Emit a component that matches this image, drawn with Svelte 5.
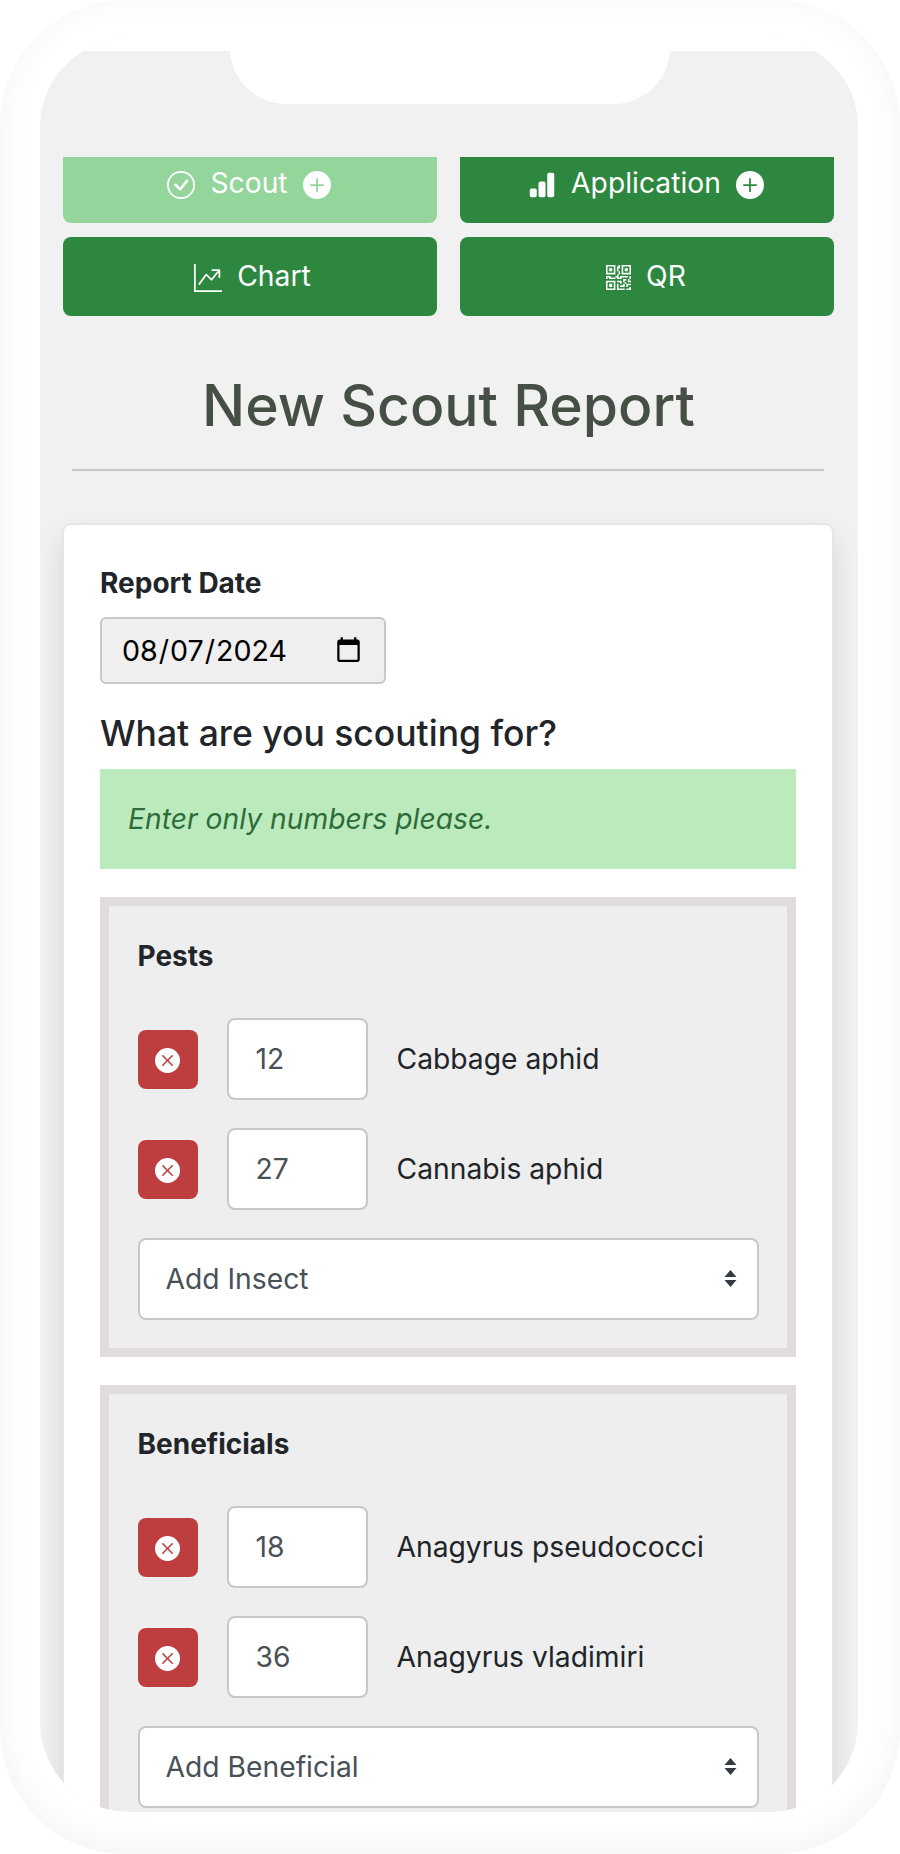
<script lang="ts">
	const groups = [
		{
			title: 'Pests',
			placeholder: 'Add Insect',
			rows: [
				{ count: 12, name: 'Cabbage aphid' },
				{ count: 27, name: 'Cannabis aphid' }
			]
		},
		{
			title: 'Beneficials',
			placeholder: 'Add Beneficial',
			rows: [
				{ count: 18, name: 'Anagyrus pseudococci' },
				{ count: 36, name: 'Anagyrus vladimiri' }
			]
		}
	];
</script>

<div class="shell">
	<div class="screen">
		<div class="topbar"></div>
		<div class="notch"></div>

		<nav class="actions">
			<button class="action faded">
				<svg class="icon" viewBox="0 0 16 16" fill="currentColor">
					<path d="M8 15A7 7 0 1 1 8 1a7 7 0 0 1 0 14zm0 1A8 8 0 1 0 8 0a8 8 0 0 0 0 16z" />
					<path d="M10.97 4.97a.235.235 0 0 0-.02.022L7.477 9.417 5.384 7.323a.75.75 0 0 0-1.06 1.06L6.97 11.03a.75.75 0 0 0 1.079-.02l3.992-4.99a.75.75 0 0 0-1.071-1.05z" />
				</svg>
				<span>Scout</span>
				<svg class="icon" viewBox="0 0 16 16" fill="currentColor">
					<path d="M16 8A8 8 0 1 1 0 8a8 8 0 0 1 16 0zM8.5 4.5a.5.5 0 0 0-1 0v3h-3a.5.5 0 0 0 0 1h3v3a.5.5 0 0 0 1 0v-3h3a.5.5 0 0 0 0-1h-3v-3z" />
				</svg>
			</button>
			<button class="action">
				<svg class="icon" viewBox="0 0 16 16" fill="currentColor">
					<path d="M1 11a1 1 0 0 1 1-1h2a1 1 0 0 1 1 1v3a1 1 0 0 1-1 1H2a1 1 0 0 1-1-1v-3zm5-4a1 1 0 0 1 1-1h2a1 1 0 0 1 1 1v7a1 1 0 0 1-1 1H7a1 1 0 0 1-1-1V7zm5-5a1 1 0 0 1 1-1h2a1 1 0 0 1 1 1v12a1 1 0 0 1-1 1h-2a1 1 0 0 1-1-1V2z" />
				</svg>
				<span>Application</span>
				<svg class="icon" viewBox="0 0 16 16" fill="currentColor">
					<path d="M16 8A8 8 0 1 1 0 8a8 8 0 0 1 16 0zM8.5 4.5a.5.5 0 0 0-1 0v3h-3a.5.5 0 0 0 0 1h3v3a.5.5 0 0 0 1 0v-3h3a.5.5 0 0 0 0-1h-3v-3z" />
				</svg>
			</button>
			<button class="action chart">
				<svg class="icon" viewBox="0 0 16 16" fill="currentColor">
					<path d="M0 0h1v15h15v1H0V0Zm10 3.5a.5.5 0 0 1 .5-.5h4a.5.5 0 0 1 .5.5v4a.5.5 0 0 1-1 0V4.9l-3.613 4.417a.5.5 0 0 1-.74.037L7.06 6.767l-3.656 5.027a.5.5 0 0 1-.808-.588l4-5.5a.5.5 0 0 1 .758-.06l2.609 2.61L13.445 4H10.5a.5.5 0 0 1-.5-.5Z" />
				</svg>
				<span>Chart</span>
			</button>
			<button class="action">
				<svg class="icon qr" viewBox="0 0 16 16" fill="currentColor">
					<path d="M2 2h2v2H2V2Z" />
					<path d="M6 0v6H0V0h6ZM5 1H1v4h4V1ZM4 12H2v2h2v-2Z" />
					<path d="M6 10v6H0v-6h6Zm-5 1v4h4v-4H1Zm11-9h2v2h-2V2Z" />
					<path d="M10 0v6h6V0h-6Zm5 1v4h-4V1h4ZM8 1V0h1v2H8v2H7V1h1Zm0 5V4h1v2H8ZM6 8V7h1V6h1v2h1V7h5v1h-4v1H7V8H6Zm0 0v1H2V8H1v1H0V7h3v1h3Zm10 1h-1V7h1v2Zm-1 0h-1v2h2v-1h-1V9Zm-4 0h2v1h-1v1h-1V9Zm2 3v-1h-1v1h-1v1H9v1h3v-2h1Zm0 0h3v1h-2v1h-1v-2Zm-4-1v1h1v-2H7v1h2Z" />
					<path d="M7 12h1v3h4v1H7v-4Zm9 2v2h-3v-1h2v-1h1Z" />
				</svg>
				<span>QR</span>
			</button>
		</nav>

		<h1>New Scout Report</h1>
		<hr />

		<form class="card">
			<label class="date-label" for="report-date">Report Date</label>
			<input id="report-date" class="date" type="date" value="2024-08-07" />

			<h2>What are you scouting for?</h2>
			<div class="alert">Enter only numbers please.</div>

			{#each groups as group}
				<fieldset class="group">
					<h3>{group.title}</h3>
					<div class="rows">
						{#each group.rows as row}
							<div class="row">
								<button type="button" class="remove" aria-label="Remove">
									<svg viewBox="0 0 16 16" fill="currentColor">
										<path d="M16 8A8 8 0 1 1 0 8a8 8 0 0 1 16 0zM5.354 4.646a.5.5 0 1 0-.708.708L7.293 8l-2.647 2.646a.5.5 0 0 0 .708.708L8 8.707l2.646 2.647a.5.5 0 0 0 .708-.708L8.707 8l2.647-2.646a.5.5 0 0 0-.708-.708L8 7.293 5.354 4.646z" />
									</svg>
								</button>
								<input class="count" type="text" value={row.count} />
								<span class="name">{row.name}</span>
							</div>
						{/each}
						<div class="select-wrap">
							<select>
								<option>{group.placeholder}</option>
							</select>
							<svg class="updown" viewBox="0 0 14 17" fill="#343a40">
								<path d="M7 0l6 7H1zM7 17L1 10h12z" />
							</svg>
						</div>
					</div>
				</fieldset>
			{/each}
		</form>
	</div>
</div>

<style>
	:global(body) {
		margin: 0;
		background: #fff;
	}

	.shell {
		width: 900px;
		height: 1854px;
		box-sizing: border-box;
		padding: 38px 42px 42px 40px;
		border-radius: 125px;
		background: #fff;
		box-shadow: inset 0 -6px 36px rgba(0, 0, 0, 0.05);
		font-family: Inter, 'Liberation Sans', sans-serif;
		color: #212529;
	}

	.screen {
		position: relative;
		height: 1774px;
		box-sizing: border-box;
		padding: 106px 24px 0 23px;
		border-radius: 90px;
		background: #f1f1f1;
		overflow: hidden;
	}

	.topbar {
		position: absolute;
		z-index: 2;
		top: 13px;
		left: 0;
		right: 0;
		height: 106px;
		background: #f1f1f1;
		box-shadow: 0 -13px 0 #fff;
	}

	.notch {
		position: absolute;
		z-index: 3;
		top: 0;
		left: 190px;
		width: 440px;
		height: 66px;
		border-radius: 0 0 56px 56px;
		background: #fff;
	}

	.actions {
		display: grid;
		grid-template-columns: 374px 374px;
		column-gap: 23px;
		row-gap: 14px;
	}

	.action {
		display: flex;
		align-items: center;
		justify-content: center;
		gap: 15px;
		height: 79px;
		padding: 2px 2px 0 0;
		border: 0;
		border-radius: 8px;
		background: #2d873f;
		color: #fff;
		font: 400 28.25px/34px Inter, sans-serif;
	}

	.action span {
		margin-bottom: 3px;
	}

	.action.faded {
		background: #93d59b;
	}

	.action.chart {
		padding-left: 5px;
		padding-right: 0;
	}

	.icon {
		width: 28px;
		height: 28px;
		flex: none;
	}

	.icon.qr {
		width: 25px;
		height: 25px;
	}

	h1 {
		margin: 56px 0 0;
		font-size: 57px;
		line-height: 68px;
		font-weight: 500;
		text-align: center;
		color: #454f45;
	}

	hr {
		height: 2px;
		margin: 29px 10px 0 9px;
		border: 0;
		background: #c8c8c8;
	}

	.card {
		margin: 54px 2px 0 1px;
		padding: 43px 36px 0;
		border-radius: 7px;
		background: #fff;
		box-shadow:
			0 0 0 2px #e6e6e6,
			0 14px 28px rgba(0, 0, 0, 0.13);
	}

	.date-label {
		display: block;
		font-size: 28px;
		line-height: 30px;
		font-weight: 700;
	}

	.date {
		display: block;
		box-sizing: border-box;
		width: 286px;
		height: 67px;
		margin-top: 19px;
		padding: 0 19px;
		border: 2px solid #c8c8c8;
		border-radius: 6px;
		background: #efefef;
		color: #000;
		font: 400 28.6px Inter, sans-serif;
	}

	h2 {
		margin: 29px 0 0;
		font-size: 35.5px;
		line-height: 42px;
		font-weight: 500;
	}

	.alert {
		box-sizing: border-box;
		height: 100px;
		margin-top: 14px;
		padding-left: 28px;
		display: flex;
		align-items: center;
		background: #bbebbd;
		color: #2e6b3c;
		font-size: 28.25px;
		font-style: italic;
	}

	.group {
		margin: 28px 0 0;
		padding: 33px 28.5px 28px;
		border: 9px solid #e0dcdc;
		background: #eee;
	}

	h3 {
		margin: 0;
		font-size: 28px;
		line-height: 34px;
		font-weight: 700;
	}

	.rows {
		display: flex;
		flex-direction: column;
		gap: 28px;
		margin-top: 45px;
	}

	.row {
		display: flex;
		align-items: center;
		gap: 29px;
	}

	.remove {
		display: flex;
		align-items: center;
		justify-content: center;
		width: 60px;
		height: 59px;
		padding: 2px 0 0;
		border: 0;
		border-radius: 8px;
		background: #be3e40;
		color: #fff;
	}

	.remove svg {
		width: 25px;
		height: 25px;
	}

	.count {
		box-sizing: border-box;
		width: 141px;
		height: 82px;
		padding: 0 26px 0 27px;
		border: 2px solid #c8c8c8;
		border-radius: 8px;
		background: #fff;
		color: #495057;
		font: 400 28.25px Inter, sans-serif;
	}

	.name {
		font-size: 28.25px;
		line-height: 34px;
	}

	.select-wrap {
		position: relative;
	}

	select {
		display: block;
		box-sizing: border-box;
		width: 100%;
		height: 82px;
		padding: 0 26px;
		border: 2px solid #c8c8c8;
		border-radius: 8px;
		background: #fff;
		color: #495057;
		font: 400 28.25px Inter, sans-serif;
		appearance: none;
	}

	.updown {
		position: absolute;
		top: 32px;
		right: 21px;
		width: 15px;
		height: 17px;
	}
</style>
